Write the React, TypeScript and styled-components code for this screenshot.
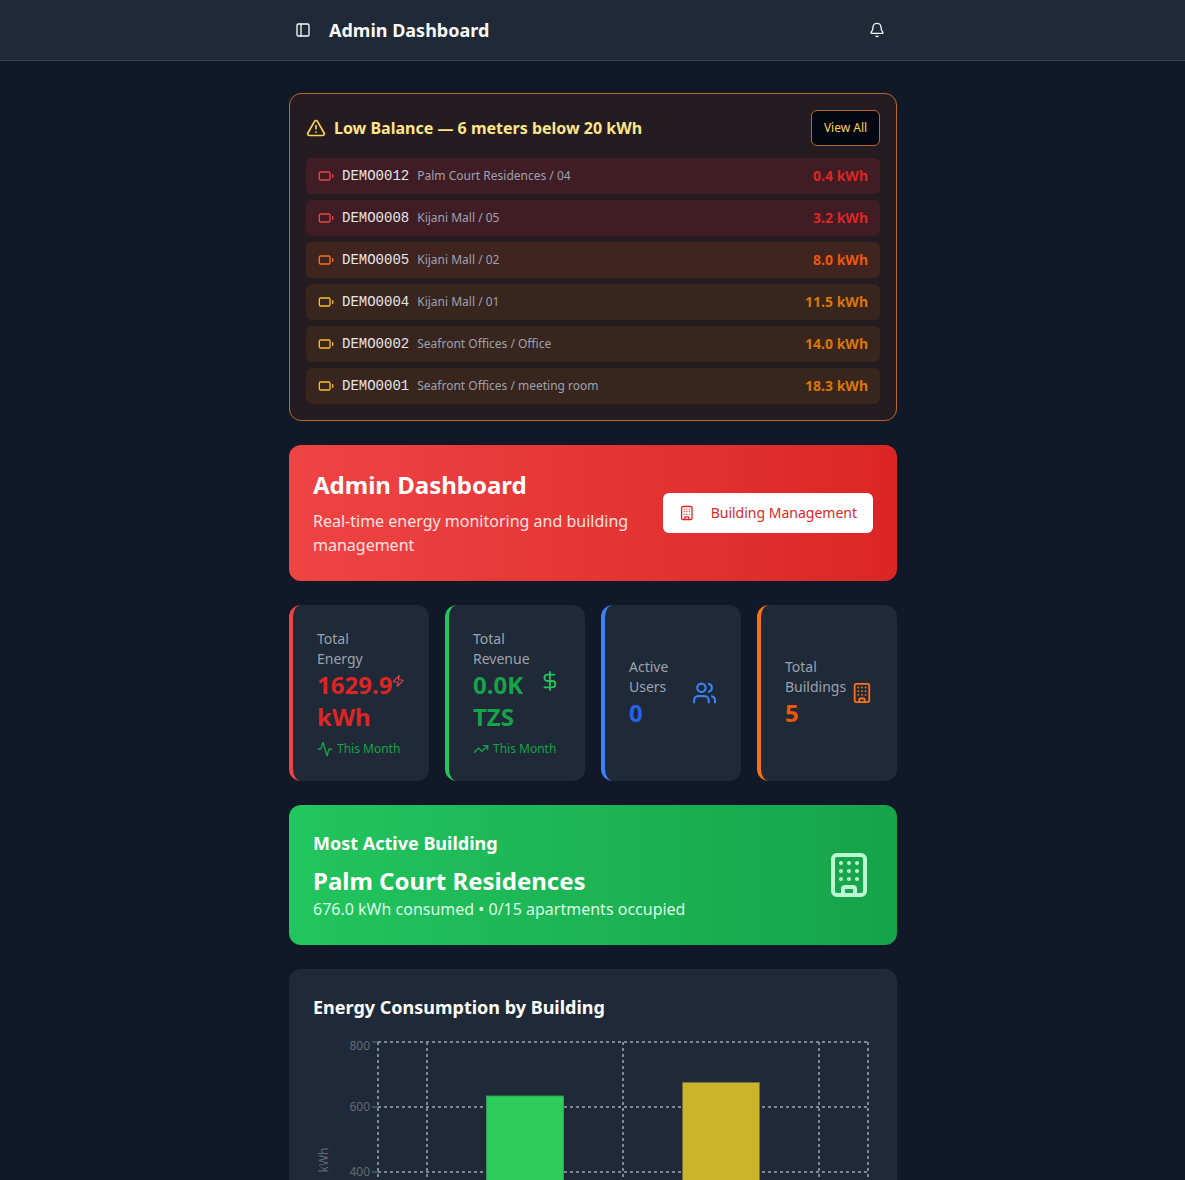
import React from "react";
import styled, { createGlobalStyle } from "styled-components";
import { PanelLeft, Bell, TriangleAlert, Battery, Building, Zap, Activity, DollarSign, TrendingUp, Users } from "lucide-react";

const Global = createGlobalStyle`
  html, body { margin: 0; background: #111827; }
  html { scrollbar-width: none; }
  body { font-family: "Noto Sans", sans-serif; color: #fff; }
  * { box-sizing: border-box; }
`;
const Page = styled.div`min-height: 1180px; background: #111827;`;
const Header = styled.header`
  height: 61px;
  border-bottom: 1px solid #374151;
  background: #1f2937;
`;
const HeaderInner = styled.div`
  width: 640px; height: 60px; margin-left: calc(50% - 319.5px); padding: 0 16px 0 22px;
  display: flex; align-items: center; justify-content: space-between;
`;
const HeaderLeft = styled.div`display: flex; align-items: center; gap: 18px; color: #f9fafb;`;
const HeaderTitle = styled.h1`margin: 0; font-size: 18px; line-height: 28px; font-weight: 700;`;
const BellWrap = styled.div`display: flex; margin-right: 12px; color: #f9fafb;`;
const Main = styled.main`width: 640px; margin-left: calc(50% - 319.5px); padding: 32px 16px 0; display: flex; flex-direction: column; gap: 24px;`;
const Alert = styled.section`
  background: #241c20; border: 1px solid #b9682c; border-radius: 12px; padding: 16px;
  display: flex; flex-direction: column; gap: 12px;
`;
const AlertHead = styled.div`display: flex; align-items: center; justify-content: space-between;`;
const AlertTitle = styled.div`display: flex; align-items: center; gap: 8px; color: #fde68a; font-size: 16px; line-height: 24px; font-weight: 700;`;
const ViewAll = styled.button`
  width: 69px; height: 36px; padding: 0; background: #030712; border: 1px solid #b9682c; border-radius: 6px;
  color: #fcd34d; font: 400 12px/16px "Noto Sans", sans-serif;
`;
const Rows = styled.div`display: flex; flex-direction: column; gap: 6px;`;
const Row = styled.div<{ $bg: string }>`
  height: 36px; border-radius: 6px; background: ${p => p.$bg}; padding: 0 12px;
  display: flex; align-items: center; font-size: 12px;
`;
const Meter = styled.span`font: 14px/20px "Liberation Mono", monospace; color: #e5e7eb; margin-left: 8px;`;
const Place = styled.span`color: #9ca3af; margin-left: 8px; line-height: 16px;`;
const Amount = styled.span<{ $c: string }>`margin-left: auto; font-size: 14px; line-height: 20px; font-weight: 700; color: ${p => p.$c};`;
const Hero = styled.section`
  height: 136px; border-radius: 12px; padding: 24px;
  background: linear-gradient(to right, #ef4444, #dc2626);
  display: flex; align-items: center; justify-content: space-between; gap: 16px;
`;
const HeroTitle = styled.h2`margin: 0 0 8px; font-size: 24px; line-height: 32px; font-weight: 700;`;
const HeroSub = styled.p`margin: 0; font-size: 16px; line-height: 24px; color: #fee2e2; width: 330px;`;
const HeroBtn = styled.button`
  flex: none; width: 210px; height: 40px; background: #fff; border: 0; border-radius: 6px; color: #dc2626; white-space: nowrap;
  display: flex; align-items: center; gap: 16px; padding: 0 16px; font: 400 14px/20px "Noto Sans", sans-serif;
`;
const Stats = styled.section`display: grid; grid-template-columns: repeat(4, minmax(0, 1fr)); gap: 16px;`;
const Stat = styled.div<{ $c: string }>`
  height: 176px; background: #1f2937; border-radius: 12px; border-left: 4px solid ${p => p.$c}; padding: 24px;
  display: flex; flex-direction: column; justify-content: center;
`;
const StatRow = styled.div`display: flex; align-items: center; justify-content: space-between;`;
const StatLabel = styled.p`margin: 0; font-size: 14px; line-height: 20px; font-weight: 400; color: #9ca3af;`;
const StatValue = styled.p<{ $c: string }>`margin: 0; font-size: 24px; line-height: 32px; font-weight: 700; color: ${p => p.$c};`;
const StatFoot = styled.div`display: flex; align-items: center; gap: 4px; margin-top: 8px; color: #16a34a; font-size: 12px; line-height: 16px; white-space: nowrap;`;
const Best = styled.section`
  height: 140px; border-radius: 12px; padding: 24px;
  background: linear-gradient(to right, #22c55e, #16a34a);
  display: flex; align-items: center; justify-content: space-between;
`;
const BestLabel = styled.h3`margin: 0 0 8px; font-size: 18px; line-height: 28px; font-weight: 700;`;
const BestName = styled.p`margin: 0; font-size: 24px; line-height: 32px; font-weight: 700;`;
const BestSub = styled.p`margin: 0; font-size: 16px; line-height: 24px; color: #dcfce7;`;
const BestIcon = styled.div`display: flex; color: #bbf7d0;`;
const ChartCard = styled.section`background: #1f2937; border-radius: 12px; padding: 24px; margin-bottom: 32px;`;
const ChartTitle = styled.h3`margin: 0 0 16px; font-size: 18px; line-height: 28px; font-weight: 700;`;
const ChartSvg = styled.svg`display: block; font-family: "Noto Sans", sans-serif;`;

const rows = [
  ["DEMO0012", "Palm Court Residences / 04", "0.4 kWh", "#dc2626", "#401d24", "#ef4444"],
  ["DEMO0008", "Kijani Mall / 05", "3.2 kWh", "#dc2626", "#401d24", "#ef4444"],
  ["DEMO0005", "Kijani Mall / 02", "8.0 kWh", "#ea580c", "#3f2420", "#f97316"],
  ["DEMO0004", "Kijani Mall / 01", "11.5 kWh", "#d97706", "#38251e", "#fbbf24"],
  ["DEMO0002", "Seafront Offices / Office", "14.0 kWh", "#d97706", "#38251e", "#fbbf24"],
  ["DEMO0001", "Seafront Offices / meeting room", "18.3 kWh", "#d97706", "#38251e", "#fbbf24"],
];

const Chart = () => {
  const ys = [0, 65, 130, 195, 260];
  const xs = [0, 49, 245, 441, 490];
  const ox = 65;
  const oy = 5;
  return (
    <ChartSvg width="560" height="290" viewBox="0 0 560 290">
      <g stroke="#808896" strokeWidth="2" strokeDasharray="3 3" fill="none">
        {ys.map(y => <line key={y} x1={ox} x2={ox + 490} y1={oy + y} y2={oy + y} />)}
        {xs.map(x => <line key={x} x1={ox + x} x2={ox + x} y1={oy} y2={oy + 260} />)}
      </g>
      <g stroke="#6b7280" strokeWidth="1">
        {ys.map(y => <line key={y} x1={ox - 6} x2={ox} y1={oy + y} y2={oy + y} />)}
      </g>
      <rect x={ox + 108.5} y={59} width={77} height={230} fill="#2ecc5a" stroke="#2f9e57" />
      <rect x={ox + 304.5} y={45.5} width={77} height={243} fill="#c9b42a" stroke="#7a7335" />
      <g fill="#626a76" fontSize="12" textAnchor="end">
        {["800", "600", "400", "200", "0"].map((t, i) => (
          <text key={t} x={ox - 8} y={i === 0 ? 13 : oy + 4 + i * 65}>{t}</text>
        ))}
      </g>
      <text transform="rotate(-90 15 123)" x="15" y="123" fill="#626a76" fontSize="12" textAnchor="middle">kWh</text>
    </ChartSvg>
  );
};

export default function App() {
  return (
    <Page>
      <Global />
      <Header>
        <HeaderInner>
          <HeaderLeft>
            <PanelLeft size={16} />
            <HeaderTitle>Admin Dashboard</HeaderTitle>
          </HeaderLeft>
          <BellWrap><Bell size={16} /></BellWrap>
        </HeaderInner>
      </Header>
      <Main>
        <Alert>
          <AlertHead>
            <AlertTitle><TriangleAlert size={20} color="#fcd34d" />Low Balance — 6 meters below 20 kWh</AlertTitle>
            <ViewAll>View All</ViewAll>
          </AlertHead>
          <Rows>
            {rows.map(r => (
              <Row key={r[0]} $bg={r[4]}>
                <Battery size={16} color={r[5]} />
                <Meter>{r[0]}</Meter>
                <Place>{r[1]}</Place>
                <Amount $c={r[3]}>{r[2]}</Amount>
              </Row>
            ))}
          </Rows>
        </Alert>
        <Hero>
          <div>
            <HeroTitle>Admin Dashboard</HeroTitle>
            <HeroSub>Real-time energy monitoring and building management</HeroSub>
          </div>
          <HeroBtn><Building size={16} />Building Management</HeroBtn>
        </Hero>
        <Stats>
          <Stat $c="#ef4444">
            <StatRow>
              <div>
                <StatLabel>Total Energy</StatLabel>
                <StatValue $c="#dc2626">1629.9 kWh</StatValue>
              </div>
              <Zap size={32} color="#ef4444" />
            </StatRow>
            <StatFoot><Activity size={16} />This Month</StatFoot>
          </Stat>
          <Stat $c="#22c55e">
            <StatRow>
              <div>
                <StatLabel>Total Revenue</StatLabel>
                <StatValue $c="#16a34a">0.0K TZS</StatValue>
              </div>
              <DollarSign size={32} color="#22c55e" />
            </StatRow>
            <StatFoot><TrendingUp size={16} />This Month</StatFoot>
          </Stat>
          <Stat $c="#3b82f6">
            <StatRow>
              <div>
                <StatLabel>Active Users</StatLabel>
                <StatValue $c="#2563eb">0</StatValue>
              </div>
              <Users size={32} color="#3b82f6" />
            </StatRow>
          </Stat>
          <Stat $c="#f97316">
            <StatRow>
              <div>
                <StatLabel>Total Buildings</StatLabel>
                <StatValue $c="#ea580c">5</StatValue>
              </div>
              <Building size={32} color="#f97316" />
            </StatRow>
          </Stat>
        </Stats>
        <Best>
          <div>
            <BestLabel>Most Active Building</BestLabel>
            <BestName>Palm Court Residences</BestName>
            <BestSub>676.0 kWh consumed • 0/15 apartments occupied</BestSub>
          </div>
          <BestIcon><Building size={48} /></BestIcon>
        </Best>
        <ChartCard>
          <ChartTitle>Energy Consumption by Building</ChartTitle>
          <Chart />
        </ChartCard>
      </Main>
    </Page>
  );
}
